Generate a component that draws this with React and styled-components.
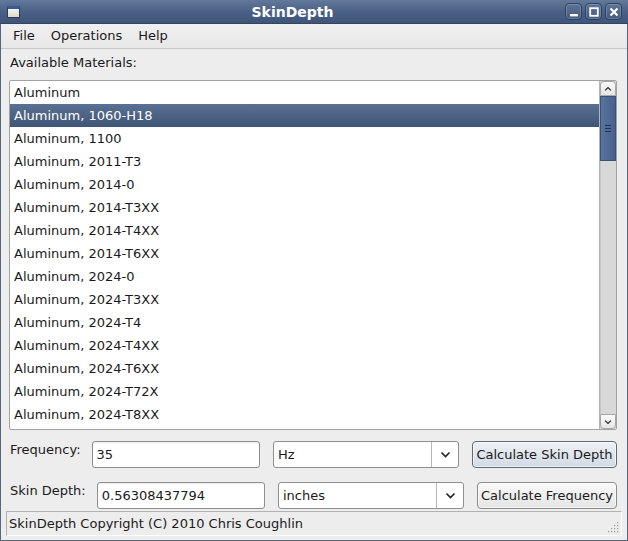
import React from 'react';
import styled, { createGlobalStyle } from 'styled-components';

const materials = [
  'Aluminum',
  'Aluminum, 1060-H18',
  'Aluminum, 1100',
  'Aluminum, 2011-T3',
  'Aluminum, 2014-0',
  'Aluminum, 2014-T3XX',
  'Aluminum, 2014-T4XX',
  'Aluminum, 2014-T6XX',
  'Aluminum, 2024-0',
  'Aluminum, 2024-T3XX',
  'Aluminum, 2024-T4',
  'Aluminum, 2024-T4XX',
  'Aluminum, 2024-T6XX',
  'Aluminum, 2024-T72X',
  'Aluminum, 2024-T8XX',
];

function Chevron({ up }) {
  return (
    <svg width="11" height="7" viewBox="0 0 11 7">
      <path
        d={up ? 'M1.5 5.5 L5.5 1.5 L9.5 5.5' : 'M1.5 1.5 L5.5 5.5 L9.5 1.5'}
        fill="none"
        stroke="#222"
        strokeWidth="1.6"
      />
    </svg>
  );
}

function Combo({ value, width }) {
  return (
    <ComboBox width={width}>
      <ComboText>{value}</ComboText>
      <ComboArrow>
        <Chevron />
      </ComboArrow>
    </ComboBox>
  );
}

function App() {
  return (
    <>
      <GlobalStyle />
      <Window>
        <TitleBar>
          <AppIcon />
          <Title>SkinDepth</Title>
          <WinButtons>
            <WinButton>
              <svg width="10" height="10" viewBox="0 0 10 10">
                <rect x="1" y="7" width="8" height="2.4" fill="#fff" />
              </svg>
            </WinButton>
            <WinButton>
              <svg width="10" height="10" viewBox="0 0 10 10">
                <rect x="1.2" y="1.2" width="7.6" height="7.6" fill="none" stroke="#fff" strokeWidth="1.8" />
              </svg>
            </WinButton>
            <WinButton>
              <svg width="10" height="10" viewBox="0 0 10 10">
                <path d="M1.5 1.5 L8.5 8.5 M8.5 1.5 L1.5 8.5" stroke="#fff" strokeWidth="2.2" />
              </svg>
            </WinButton>
          </WinButtons>
        </TitleBar>

        <MenuBar>
          <MenuItem>File</MenuItem>
          <MenuItem>Operations</MenuItem>
          <MenuItem>Help</MenuItem>
        </MenuBar>

        <Body>
          <Caption>Available Materials:</Caption>
          <ListFrame>
            <Rows>
              {materials.map((m, i) => (
                <Row key={m} selected={i === 1}>{m}</Row>
              ))}
            </Rows>
            <ScrollBar>
              <ScrollButton top>
                <Chevron up />
              </ScrollButton>
              <Handle>
                <Grip />
                <Grip />
                <Grip />
              </Handle>
              <Trough />
              <ScrollButton>
                <Chevron />
              </ScrollButton>
            </ScrollBar>
          </ListFrame>

          <FormRow>
            <Label>Frequency:</Label>
            <Input>35</Input>
            <Combo value="Hz" width={186} />
            <PushButton primary width={145}>Calculate Skin Depth</PushButton>
          </FormRow>
          <FormRow>
            <Label>Skin Depth:</Label>
            <Input>0.56308437794</Input>
            <Combo value="inches" width={186} />
            <PushButton width={140}>Calculate Frequency</PushButton>
          </FormRow>
        </Body>

        <StatusBar>
          <span>SkinDepth Copyright (C) 2010 Chris Coughlin</span>
          <SizeGrip>
            <svg width="12" height="12" viewBox="0 0 12 12">
              {[[10, 2], [7, 5], [10, 5], [4, 8], [7, 8], [10, 8], [1, 11], [4, 11], [7, 11], [10, 11]].map(([x, y]) => (
                <rect key={x + '-' + y} x={x} y={y - 1} width="1.2" height="1.2" fill="#9a9a9a" />
              ))}
            </svg>
          </SizeGrip>
        </StatusBar>
      </Window>
    </>
  );
}

export default App;

const GlobalStyle = createGlobalStyle`
  html, body {
    margin: 0;
    padding: 0;
    background: #ededed;
  }
  body {
    font-family: "DejaVu Sans", "Liberation Sans", sans-serif;
    font-size: 13px;
    color: #1a1a1a;
  }
`;

const Window = styled.div`
  width: 628px;
  height: 541px;
  box-sizing: border-box;
  display: flex;
  flex-direction: column;
  background: #ededed;
  border-left: 1px solid #56667d;
  border-right: 1px solid #56667d;
  border-bottom: 1px solid #56667d;
`;

const TitleBar = styled.div`
  height: 23px;
  flex: none;
  display: flex;
  align-items: center;
  padding: 0 6px 0 7px;
  background: linear-gradient(#62799b, #4a6186 50%, #3f5679);
  border-bottom: 1px solid #34465f;
  margin: 0 -1px;
`;

const AppIcon = styled.div`
  width: 13px;
  height: 12px;
  box-sizing: border-box;
  border: 1px solid #2c3c56;
  border-top-width: 3px;
  border-top-color: #3a5a92;
  background: linear-gradient(#f4f4ec, #d8dcc8);
`;

const Title = styled.div`
  flex: 1;
  text-align: center;
  color: #fff;
  font-weight: bold;
  font-size: 14px;
`;

const WinButtons = styled.div`
  display: flex;
  gap: 3px;
`;

const WinButton = styled.div`
  width: 17px;
  height: 17px;
  box-sizing: border-box;
  border: 1px solid #2f4160;
  border-radius: 4px;
  background: linear-gradient(#5d7498, #445b80);
  box-shadow: inset 0 0 0 1px rgba(255, 255, 255, 0.18);
  display: flex;
  align-items: center;
  justify-content: center;
`;

const MenuBar = styled.div`
  height: 24px;
  flex: none;
  display: flex;
  align-items: center;
  padding: 0 4px;
  border-bottom: 1px solid #c6c6c6;
  background: linear-gradient(#f0f0f0, #e7e7e7);
`;

const MenuItem = styled.div`
  padding: 0 8px 0 8px;
  line-height: 24px;
`;

const Body = styled.div`
  flex: 1;
  display: flex;
  flex-direction: column;
  padding: 0 10px 0 8px;
`;

const Caption = styled.div`
  height: 31px;
  line-height: 27px;
  padding-left: 1px;
`;

const ListFrame = styled.div`
  height: 348px;
  display: flex;
  border: 1px solid #a2a2a2;
  border-radius: 2px;
  background: #fff;
  overflow: hidden;
`;

const Rows = styled.div`
  flex: 1;
  display: flex;
  flex-direction: column;
  border-right: 1px solid #b4b4b4;
`;

const Row = styled.div`
  height: 23px;
  line-height: 23px;
  padding-left: 4px;
  color: ${(p) => (p.selected ? '#fff' : '#1a1a1a')};
  background: ${(p) => (p.selected ? 'linear-gradient(#5a7194, #3f5575)' : 'transparent')};
`;

const ScrollBar = styled.div`
  width: 16px;
  display: flex;
  flex-direction: column;
  background: #d6d6d6;
`;

const ScrollButton = styled.div`
  height: 15px;
  box-sizing: border-box;
  display: flex;
  align-items: center;
  justify-content: center;
  background: linear-gradient(#fafafa, #e6e6e6);
  border: 1px solid #a8a8a8;
  border-radius: ${(p) => (p.top ? '4px 4px 0 0' : '0 0 4px 4px')};
  svg {
    width: 8px;
    height: 6px;
  }
`;

const Handle = styled.div`
  height: 65px;
  box-sizing: border-box;
  background: linear-gradient(90deg, #5874a0, #47618a);
  border: 1px solid #3a5074;
  display: flex;
  flex-direction: column;
  align-items: center;
  justify-content: center;
  gap: 2px;
`;

const Grip = styled.div`
  width: 6px;
  height: 1px;
  background: #23324c;
`;

const Trough = styled.div`
  flex: 1;
  background: #d8d8d8;
  border-left: 1px solid #c6c6c6;
`;

const FormRow = styled.div`
  display: flex;
  align-items: center;
  gap: 11px;
  margin-top: 10px;
  height: 28px;
  & + & {
    margin-top: 13px;
  }
`;

const Label = styled.div`
  padding-left: 1px;
  margin-top: -9px;
`;

const Input = styled.div`
  flex: 1;
  height: 27px;
  box-sizing: border-box;
  border: 1px solid #8f8f8f;
  border-radius: 3px;
  background: #fff;
  box-shadow: inset 0 1px 1px rgba(0, 0, 0, 0.08);
  padding-left: 4px;
  line-height: 25px;
`;

const ComboBox = styled.div`
  width: ${(p) => p.width}px;
  height: 27px;
  box-sizing: border-box;
  display: flex;
  border: 1px solid #8f8f8f;
  border-radius: 3px;
  background: #fff;
  margin-left: 2px;
`;

const ComboText = styled.div`
  flex: 1;
  padding-left: 4px;
  line-height: 25px;
`;

const ComboArrow = styled.div`
  width: 26px;
  border-left: 1px solid #b8b8b8;
  display: flex;
  align-items: center;
  justify-content: center;
`;

const PushButton = styled.div`
  width: ${(p) => p.width}px;
  height: 27px;
  box-sizing: border-box;
  margin-left: 2px;
  border: 1px solid ${(p) => (p.primary ? '#5d6a7c' : '#8c8c8c')};
  border-radius: 4px;
  background: ${(p) =>
    p.primary ? 'linear-gradient(#eef1f5, #d3dae4)' : 'linear-gradient(#fafafa, #e4e4e4)'};
  box-shadow: inset 0 0 0 1px rgba(255, 255, 255, 0.6);
  display: flex;
  align-items: center;
  justify-content: center;
  white-space: nowrap;
`;

const StatusBar = styled.div`
  position: relative;
  height: 25px;
  box-sizing: border-box;
  margin: 0 5px 4px 5px;
  border: 1px solid #b2b2b2;
  border-right-color: #fff;
  border-bottom-color: #fff;
  padding-left: 2px;
  line-height: 23px;
  display: flex;
  justify-content: space-between;
`;

const SizeGrip = styled.div`
  display: flex;
  align-items: flex-end;
  padding: 0 2px 2px 0;
`;
